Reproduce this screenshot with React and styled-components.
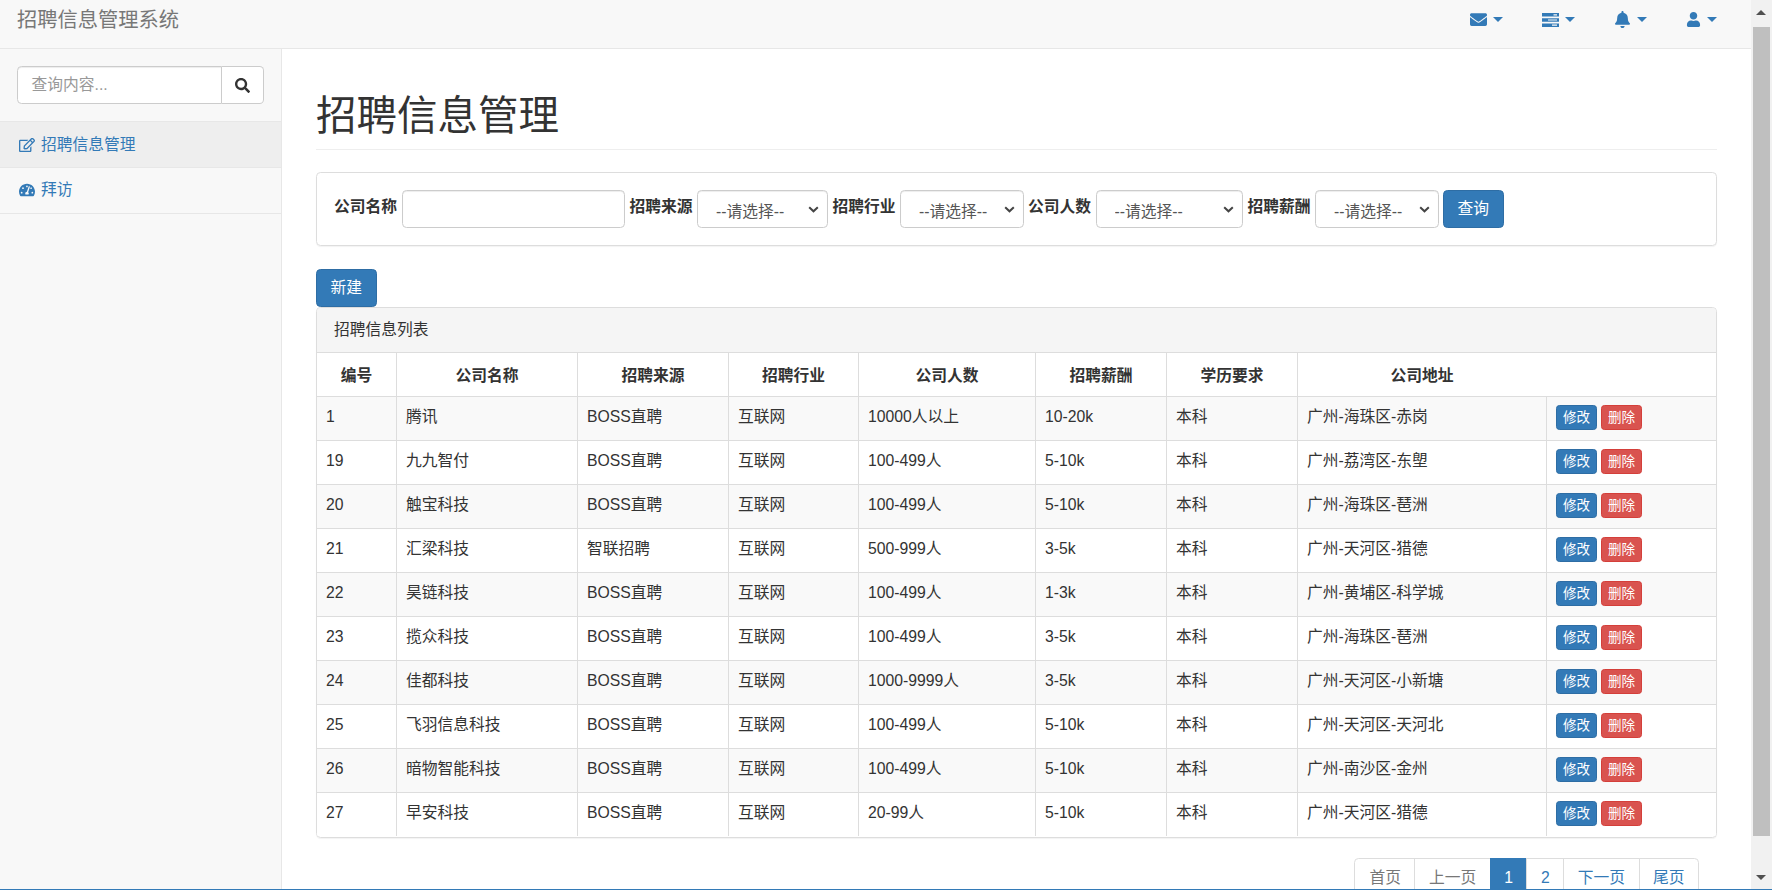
import React from "react";
import styled, { createGlobalStyle } from "styled-components";
import { FaEnvelope, FaBell, FaUser, FaSearch, FaRegEdit, FaTachometerAlt } from "react-icons/fa";

const FONT = `"Liberation Sans", "Noto Sans CJK SC", sans-serif`;
const BLUE = "#337ab7";
const CHEVRON = `url("data:image/svg+xml,%3Csvg xmlns='http://www.w3.org/2000/svg' width='11' height='7' viewBox='0 0 11 7'%3E%3Cpath d='M1.2 1.2l4.3 4.1 4.3-4.1' fill='none' stroke='%23444' stroke-width='2'/%3E%3C/svg%3E")`;

const Global = createGlobalStyle`
  html, body { margin: 0; height: 100%; overflow: hidden; background: #fff; }
  * { box-sizing: border-box; }
  body { font-family: ${FONT}; font-size: 15.75px; line-height: 22.5px; color: #333; }
`;

const Root = styled.div`
  display: flex; width: 1772px; height: 890px; overflow: hidden;
  border-bottom: 1px solid ${BLUE};
`;
const Viewport = styled.div`
  flex: 0 0 1751px; display: flex; flex-direction: column; min-width: 0; overflow: hidden;
`;
const Navbar = styled.header`
  flex: 0 0 49px; display: flex; align-items: center; justify-content: space-between;
  padding: 0 34px 9px 17px; background: #f8f8f8; border-bottom: 1px solid #e7e7e7;
`;
const Brand = styled.div`margin-top: 2px; font-size: 20.25px; color: #777;`;
const NavList = styled.nav`display: flex;`;
const NavItem = styled.div`
  width: 72px; display: flex; align-items: center; gap: 6px; color: ${BLUE};
  &:last-child { width: 31px; }
`;
const Caret = styled.span`
  width: 0; height: 0; border-style: solid; border-width: 5.5px 5px 0 5px;
  border-color: ${BLUE} transparent transparent transparent;
`;
const Body = styled.div`flex: 1; display: flex; min-height: 0;`;
const Sidebar = styled.aside`
  flex: 0 0 282px; background: #f8f8f8; border-right: 1px solid #e7e7e7;
`;
const SearchBox = styled.div`display: flex; padding: 17px 17px;`;
const SearchInput = styled.div`
  flex: 0 0 205px; height: 38.25px; padding: 7px 13.5px; background: #fff; color: #999;
  border: 1px solid #ccc; border-radius: 4.5px 0 0 4.5px;
  box-shadow: inset 0 1px 1px rgba(0,0,0,.075);
`;
const SearchButton = styled.div`
  flex: 1; height: 38.25px; display: flex; align-items: center; justify-content: center; color: #333;
  background: #fff; border: 1px solid #ccc; border-left: 0; border-radius: 0 4.5px 4.5px 0;
`;
const MenuItem = styled.div`
  height: 46px; display: flex; align-items: center; gap: 6px; padding: 0 0 0 19px;
  color: ${BLUE}; border-top: 1px solid #e7e7e7;
  background: ${(p) => (p.$active ? "#eee" : "transparent")};
  &:last-child { height: 47px; padding-bottom: 2px; border-bottom: 1px solid #e7e7e7; }
`;
const Main = styled.main`flex: 1; min-width: 0; padding: 0 34px;`;
const Title = styled.h1`
  margin: 44.5px 0 21.5px; padding-bottom: 11px; font-size: 40.5px; line-height: 44.5px;
  font-weight: 400; color: #333; border-bottom: 1px solid #eee;
`;
const FilterPanel = styled.section`
  display: flex; align-items: flex-start; gap: 4.5px; height: 74px; padding: 17.5px 17px;
  border: 1px solid #ddd; border-radius: 4.5px; box-shadow: 0 1px 1px rgba(0,0,0,.05);
`;
const FilterLabel = styled.label`margin-top: 6px; font-weight: 700; white-space: nowrap; color: #333;`;
const TextInput = styled.input`
  width: 223.5px; height: 38.25px; padding: 6px 13.5px; background: #fff;
  border: 1px solid #ccc; border-radius: 4.5px; box-shadow: inset 0 1px 1px rgba(0,0,0,.075);
  font: inherit;
`;
const Select = styled.select`
  appearance: none; width: ${(p) => p.$w}px; height: 38.25px; padding: 10px 20px 6px 18px; color: #555;
  background: #fff ${CHEVRON} no-repeat right 8px center;
  border: 1px solid #ccc; border-radius: 4.5px; box-shadow: inset 0 1px 1px rgba(0,0,0,.075);
  font-family: ${FONT}; font-size: 15.75px; line-height: 22.5px;
`;
const PrimaryButton = styled.button`
  height: 38.25px; padding: 0 13.5px; background: ${BLUE}; color: #fff;
  border: 1px solid #2e6da4; border-radius: 4.5px; font-family: ${FONT}; font-size: 15.75px; line-height: 22.5px;
`;
const NewRow = styled.div`
  margin-top: 23px; display: flex;
  ${PrimaryButton} { padding-top: 2px; }
`;
const ListPanel = styled.section`
  padding-bottom: 1px; border: 1px solid #ddd; border-radius: 4.5px;
  box-shadow: 0 1px 1px rgba(0,0,0,.05); overflow: hidden;
`;
const PanelHeading = styled.div`
  height: 44px; padding: 11.5px 17px 0; background: #f5f5f5;
`;
const Table = styled.table`
  width: 1399px; table-layout: fixed; border-collapse: separate; border-spacing: 0;
`;
const Th = styled.th`
  height: 44px; padding: 12px 9px 0; text-align: center; vertical-align: top; font-weight: 700;
  border-top: 1px solid #ddd; border-left: 1px solid #ddd;
  &:first-child { border-left: 0; }
  &:last-child { border-left: 0; }
`;
const Row = styled.tr`background: ${(p) => (p.$odd ? "#f9f9f9" : "#fff")};`;
const Td = styled.td`
  height: 44px; padding: 9.5px 9px 0; vertical-align: top; white-space: nowrap;
  border-top: 1px solid #ddd; border-left: 1px solid #ddd;
  &:first-child { border-left: 0; }
`;
const Actions = styled.div`display: flex; gap: 4px; margin-top: -1px;`;
const SmallButton = styled.button`
  height: 25px; width: 41px; padding: 0; font-family: ${FONT}; font-size: 13.5px; line-height: 20px; color: #fff;
  background: ${(p) => (p.$danger ? "#d9534f" : BLUE)};
  border: 1px solid ${(p) => (p.$danger ? "#d43f3a" : "#2e6da4")};
  border-radius: 3.4px;
`;
const Pager = styled.div`display: flex; justify-content: flex-end; margin-top: 20px; padding-right: 18px;`;
const PageLink = styled.span`
  height: 38.25px; padding: 8px 13.5px 0; margin-left: -1px;
  color: ${(p) => (p.$active ? "#fff" : p.$muted ? "#777" : BLUE)};
  background: ${(p) => (p.$active ? BLUE : "#fff")};
  border: 1px solid ${(p) => (p.$active ? BLUE : "#ddd")};
  &:first-child { padding-left: 14.5px; border-radius: 4.5px 0 0 4.5px; }
  &:last-child { border-radius: 0 4.5px 4.5px 0; }
`;
const Scrollbar = styled.aside`
  flex: 0 0 21px; display: flex; flex-direction: column; background: #f1f1f1;
`;
const ScrollEnd = styled.div`
  flex: ${(p) => (p.$grow ? 1 : "0 0 27px")}; display: flex; justify-content: center; padding: ${(p) => p.$pad};
  padding-right: 1px;
`;
const ArrowUp = styled.span`
  width: 0; height: 0; border-style: solid; border-width: 0 5px 5px 5px;
  border-color: transparent transparent #505050 transparent;
`;
const ArrowDown = styled.span`
  width: 0; height: 0; border-style: solid; border-width: 5px 5px 0 5px;
  border-color: #505050 transparent transparent transparent;
`;
const Thumb = styled.div`flex: 0 0 809px; margin: 0 2px; background: #bfbfbf;`;

const TasksIcon = () => (
  <svg width="17" height="14" viewBox="0 0 17 14" aria-hidden="true">
    <path fill={BLUE} d="M0 0h17v3.6H0zM0 5.2h17v3.6H0zM0 10.4h17V14H0z" />
    <path fill="#f8f8f8" d="M11.5 1.2h3.5v1.2h-3.5zM6 6.4h9v1.2H6zM10 11.6h5v1.2h-5z" />
  </svg>
);

const columns = [79, 181, 151, 130, 177, 131, 131, 249, 170];
const headers = ["编号", "公司名称", "招聘来源", "招聘行业", "公司人数", "招聘薪酬", "学历要求", "公司地址", ""];
const rows = [
  ["1", "腾讯", "BOSS直聘", "10000人以上", "10-20k", "广州-海珠区-赤岗"],
  ["19", "九九智付", "BOSS直聘", "100-499人", "5-10k", "广州-荔湾区-东塱"],
  ["20", "触宝科技", "BOSS直聘", "100-499人", "5-10k", "广州-海珠区-琶洲"],
  ["21", "汇梁科技", "智联招聘", "500-999人", "3-5k", "广州-天河区-猎德"],
  ["22", "昊链科技", "BOSS直聘", "100-499人", "1-3k", "广州-黄埔区-科学城"],
  ["23", "揽众科技", "BOSS直聘", "100-499人", "3-5k", "广州-海珠区-琶洲"],
  ["24", "佳都科技", "BOSS直聘", "1000-9999人", "3-5k", "广州-天河区-小新塘"],
  ["25", "飞羽信息科技", "BOSS直聘", "100-499人", "5-10k", "广州-天河区-天河北"],
  ["26", "暗物智能科技", "BOSS直聘", "100-499人", "5-10k", "广州-南沙区-金州"],
  ["27", "早安科技", "BOSS直聘", "20-99人", "5-10k", "广州-天河区-猎德"],
];
const filters = [["招聘来源", 131], ["招聘行业", 123.5], ["公司人数", 147.5], ["招聘薪酬", 123.5]];

export default function App() {
  return (
    <>
      <Global />
      <Root>
        <Viewport>
          <Navbar>
            <Brand>招聘信息管理系统</Brand>
            <NavList>
              <NavItem><FaEnvelope size={17} /><Caret /></NavItem>
              <NavItem><TasksIcon /><Caret /></NavItem>
              <NavItem><FaBell size={17} /><Caret /></NavItem>
              <NavItem><FaUser size={15} /><Caret /></NavItem>
            </NavList>
          </Navbar>
          <Body>
            <Sidebar>
              <SearchBox>
                <SearchInput>查询内容...</SearchInput>
                <SearchButton><FaSearch size={15} /></SearchButton>
              </SearchBox>
              <MenuItem $active><FaRegEdit size={16} />招聘信息管理</MenuItem>
              <MenuItem><FaTachometerAlt size={16} />拜访</MenuItem>
            </Sidebar>
            <Main>
              <Title>招聘信息管理</Title>
              <FilterPanel>
                <FilterLabel>公司名称</FilterLabel>
                <TextInput />
                {filters.map(([label, w]) => (
                  <React.Fragment key={label}>
                    <FilterLabel>{label}</FilterLabel>
                    <Select $w={w}><option>--请选择--</option></Select>
                  </React.Fragment>
                ))}
                <PrimaryButton>查询</PrimaryButton>
              </FilterPanel>
              <NewRow><PrimaryButton>新建</PrimaryButton></NewRow>
              <ListPanel>
                <PanelHeading>招聘信息列表</PanelHeading>
                <Table>
                  <colgroup>{columns.map((w, i) => <col key={i} width={w} />)}</colgroup>
                  <thead>
                    <tr>{headers.map((h, i) => <Th key={i}>{h}</Th>)}</tr>
                  </thead>
                  <tbody>
                    {rows.map((r, i) => (
                      <Row key={r[0]} $odd={i % 2 === 0}>
                        <Td>{r[0]}</Td>
                        <Td>{r[1]}</Td>
                        <Td>{r[2]}</Td>
                        <Td>互联网</Td>
                        <Td>{r[3]}</Td>
                        <Td>{r[4]}</Td>
                        <Td>本科</Td>
                        <Td>{r[5]}</Td>
                        <Td>
                          <Actions>
                            <SmallButton>修改</SmallButton>
                            <SmallButton $danger>删除</SmallButton>
                          </Actions>
                        </Td>
                      </Row>
                    ))}
                  </tbody>
                </Table>
              </ListPanel>
              <Pager>
                <PageLink $muted>首页</PageLink>
                <PageLink $muted>上一页</PageLink>
                <PageLink $active>1</PageLink>
                <PageLink>2</PageLink>
                <PageLink>下一页</PageLink>
                <PageLink>尾页</PageLink>
              </Pager>
            </Main>
          </Body>
        </Viewport>
        <Scrollbar>
          <ScrollEnd $pad="10px 0 0"><ArrowUp /></ScrollEnd>
          <Thumb />
          <ScrollEnd $grow $pad="39px 0 0"><ArrowDown /></ScrollEnd>
        </Scrollbar>
      </Root>
    </>
  );
}
